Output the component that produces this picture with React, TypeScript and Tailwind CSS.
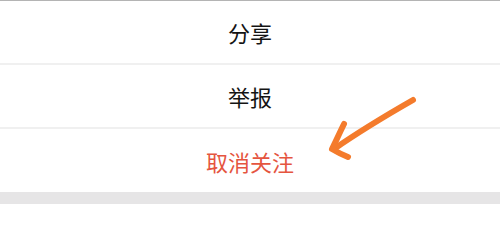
import React from 'react';

const items = [
  { label: '分享', danger: false },
  { label: '举报', danger: false },
  { label: '取消关注', danger: true },
];

export default function App() {
  return (
    <div
      className="relative flex h-[204px] w-[500px] flex-col overflow-hidden bg-white"
      style={{ fontFamily: '"Noto Sans CJK SC", "Noto Sans", sans-serif' }}
    >
      <div className="h-px bg-[#b4b4b4]" />
      {items.map((it, i) => (
        <React.Fragment key={it.label}>
          {i > 0 ? <div className="h-[2px] bg-[#f0f0f0]" /> : null}
          <div
            className={`flex items-center justify-center text-[22px] leading-none ${i === 2 ? 'h-[63px]' : 'h-[62px]'} ${
              it.danger ? 'text-[#e5553f]' : 'text-[#141414]'
            }`}
          >
            {it.label}
          </div>
        </React.Fragment>
      ))}
      <div className="flex-1 bg-[#e6e5e6]" />

      {/* 手绘箭头 */}
      <svg className="absolute left-0 top-0" width="500" height="204" viewBox="0 0 500 204">
        <g stroke="#f47b2c" strokeWidth="6" strokeLinecap="round" strokeLinejoin="round" fill="none">
          <path d="M413 100 C392 112 360 131 334 149" />
          <path d="M344 124 C340 132 336 141 332 149 C337 152 343 155 348 157" />
        </g>
      </svg>
    </div>
  );
}
